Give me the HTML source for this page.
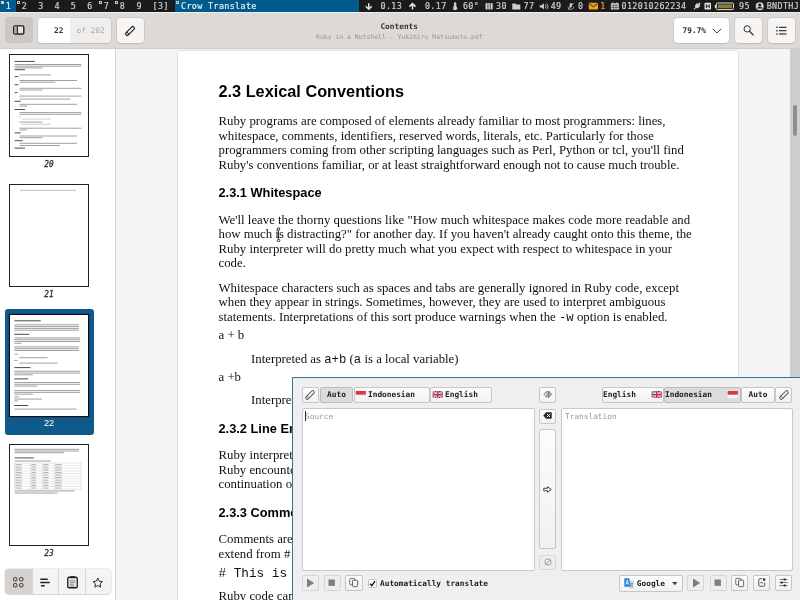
<!DOCTYPE html>
<html><head><meta charset="utf-8"><title>Contents</title>
<style>
*{box-sizing:border-box;margin:0;padding:0}
html,body{width:800px;height:600px;overflow:hidden;background:#f6f5f4}
body{position:relative;will-change:transform;font-family:"DejaVu Sans Mono","Liberation Mono",monospace;color:#2e3436}
.abs{position:absolute}
/* top bar */
#bar{position:absolute;left:0;top:0;width:800px;height:12px;background:#1b1b1b;color:#cfcfcf;font-size:8.4px;letter-spacing:0.37px;line-height:12.6px;white-space:pre;overflow:hidden}
#bar span{position:absolute;top:0;height:12px;-webkit-text-stroke:0.18px currentColor}
#bar .sq{width:3px;height:3px;border:0.8px solid #c8c8c8;top:1px;background:transparent}
/* header */
#hdr{position:absolute;left:0;top:12px;width:800px;height:37px;background:#dcd9d6;border-top:1.500px solid #f1f0ef;border-bottom:1px solid #cfccc9}
.btn{position:absolute;background:#f6f5f4;border-radius:4px;box-shadow:0 0 0 1px rgba(0,0,0,.06),0 1px 1px rgba(0,0,0,.08)}
/* sidebar */
#side{position:absolute;left:0;top:49px;width:116px;height:551px;background:#fff;border-right:1px solid #d5d2cf}
.thumb{position:absolute;left:10px;width:80px;background:#fff;border:1px solid #222}
.tlabel{position:absolute;left:0;width:98px;text-align:center;font-style:italic;font-weight:normal;-webkit-text-stroke:0.3px #2a2a2a;font-size:8.800px;line-height:10px;color:#2a2a2a;transform:scaleX(.88)}
/* document */
#page{position:absolute;left:178px;top:51px;width:560px;height:549px;background:#fff;box-shadow:0 0 2px rgba(0,0,0,.25)}
.ln{position:absolute;white-space:pre;font-family:"Liberation Serif",serif;font-size:12.8px;line-height:15px;color:#111}
.h1{font-family:"Liberation Sans",sans-serif;font-weight:bold;font-size:16.3px;line-height:20px;color:#000}
.h2{font-family:"Liberation Sans",sans-serif;font-weight:bold;font-size:12.8px;line-height:15px;color:#000}
.tt{font-family:"Liberation Mono",monospace;font-size:12.300px}
/* crow */
#crow{position:absolute;left:292px;top:377px;width:520px;height:230px;background:#efefef;border:1px solid #3a7396;box-shadow:inset 0 1px 0 #e2eff6;font-size:7.8px;color:#222}
.qb{position:absolute;line-height:14px;font-weight:bold;font-size:7.8px;color:#1a1a1a;overflow:hidden;background:linear-gradient(#fcfcfc,#f1f1f1);border:1px solid #c6c6c6;border-radius:2px;height:15.5px;white-space:pre}
.qb.dis{background:#eeeeee;border-color:#d6d6d6}
.qb.on{background:#dcdcdc;border-color:#bdbdbd}
.ta{position:absolute;background:#fff;border:1px solid #c8c8c8;border-radius:2px}
.ph{position:absolute;color:#9a9a9a;font-size:7.8px;line-height:10px}
</style></head><body>

<div id="bar">
<span style="left:0;width:16px;background:#005b8c"></span><span style="left:174.5px;width:184.5px;background:#005b8c"></span>
<span style="left:5.7px;color:#ececec">1</span><span style="left:21.8px">2</span><span style="left:38.3px">3</span><span style="left:54.5px">4</span><span style="left:70.7px">5</span><span style="left:87.2px">6</span><span style="left:103.7px">7</span><span style="left:119.7px">8</span><span style="left:136.6px">9</span><span style="left:152.6px">[3]</span>
<span style="left:181px;color:#e6eef4">Crow Translate</span><span class="sq" style="left:17.2px"></span><span class="sq" style="left:99px"></span><span class="sq" style="left:115.4px"></span><span class="sq" style="left:176.2px"></span><span class="sq" style="left:0.8px;background:#e8e8e8"></span>
<span style="left:380.5px">0.13</span><span style="left:424.9px">0.17</span><span style="left:462.9px">60°</span><span style="left:496px">30</span><span style="left:523.5px">77</span><span style="left:550.7px">49</span><span style="left:577.9px">0</span><span style="left:621.5px">012010262234</span><span style="left:739.1px">95</span><span style="left:766.7px">BNDTHJ</span><span style="left:600.3px;color:#f0a020">1</span>
<svg class="abs" style="left:0;top:0" width="800" height="12" viewBox="0 0 800 12">
<g fill="none" stroke="#e4e4e4" stroke-width="1.5"><path d="M368.800 3.300V9M365.800 6.300L368.800 9.300L371.800 6.300"/><path d="M412.500 9.600V3.800M409.500 6.600L412.500 3.600L415.500 6.600"/></g>
<g fill="#cfcfcf"><rect x="453.900" y="2.300" width="2.400" height="6" rx="1.200"/><circle cx="455.100" cy="8.200" r="2.100"/>
<rect x="485.500" y="3" width="7.200" height="6.600" rx="0.800"/>
<path d="M512.300 3.600h3l.8 1h4.200v4.900h-8z"/>
<path d="M539.800 5.200h1.800l2.300-2v6.400l-2.300-2h-1.800z"/></g>
<g fill="none" stroke="#cfcfcf" stroke-width="0.800"><path d="M545.200 4.600a2.500 2.500 0 0 1 0 3.600M546.600 3.400a4.200 4.200 0 0 1 0 6"/></g>
<g fill="#1b1b1b"><rect x="487.600" y="3" width="0.700" height="6.600"/><rect x="489.900" y="3" width="0.700" height="6.600"/></g>
<g fill="#bdbdbd"><rect x="569.600" y="3" width="2.400" height="4.400" rx="1.200"/><path d="M568.300 6.500a2.500 2.500 0 0 0 5 0h.6a3 3 0 0 1-2.800 3v.5h-.6v-.5a3 3 0 0 1-2.800-3z"/></g>
<path d="M573.500 3L568 9.800" stroke="#cfcfcf" stroke-width="0.900"/>
<rect x="588.800" y="2.800" width="9.200" height="6.600" rx="0.600" fill="#f0a020"/><path d="M589.300 3.600L593.400 6.800L597.500 3.600" fill="none" stroke="#1b1b1b" stroke-width="0.900"/>
<g fill="#cfcfcf"><rect x="610.800" y="3.300" width="8.200" height="6.300" rx="0.600"/><rect x="612.300" y="2.300" width="1" height="1.600"/><rect x="616.500" y="2.300" width="1" height="1.600"/></g>
<g stroke="#1b1b1b" stroke-width="0.500"><path d="M611 5.200H619M613.500 5.200V9.600M616 5.200V9.600M611 7.400H619"/></g>
<g fill="#cfcfcf"><path d="M699.500 2.600l1.200 1.200-1.300 1.300.9.900-1.600 1.600c-.8.800-1.900.9-2.700.4l-1.700 1.700-.7-.7 1.700-1.700c-.5-.8-.4-1.900.4-2.700l1.600-1.600.9.900z"/>
<rect x="704.500" y="2.800" width="6.500" height="6.800" rx="0.800" fill="#e6e6e6"/></g>
<path d="M706.300 4.300V8.100M709.200 4.300V8.100M706.300 6.200H709.200" stroke="#1b1b1b" stroke-width="1"/>
<rect x="716.300" y="3" width="17.200" height="6.600" rx="1.200" fill="none" stroke="#e0e0e0" stroke-width="1"/><rect x="714.800" y="4.800" width="1.400" height="3" fill="#e0e0e0"/><rect x="717.800" y="4.400" width="14.200" height="3.800" fill="#8c7a3a"/>
<circle cx="759.700" cy="6.200" r="4" fill="#cfcfcf"/><circle cx="759.700" cy="4.900" r="1.500" fill="#1b1b1b"/><path d="M756.900 8.600a2.900 2.600 0 0 1 5.600 0z" fill="#1b1b1b"/>
</svg>
</div>

<div id="hdr"></div>
<div class="btn" style="left:5px;top:17px;width:28px;height:26px;background:#cbc7c3;box-shadow:none"></div>
<div class="btn" style="left:38px;top:17.600px;width:73.200px;height:25.400px;background:#efeeed"></div>
<div class="btn" style="left:38px;top:17.600px;width:32px;height:25.400px;background:#fff;border-radius:4px 0 0 4px;box-shadow:none"></div>
<div class="abs" style="left:38px;top:17.500px;width:25.500px;height:26px;line-height:26px;text-align:right;font-size:7.800px;font-weight:bold;color:#2e3436">22</div>
<div class="abs" style="left:76.5px;top:17.700px;height:26px;line-height:26px;font-size:7.800px;color:#aaa7a4">of 202</div>
<div class="btn" style="left:117px;top:17.500px;width:27px;height:25.500px"></div>
<div class="abs" style="left:299.2px;top:20.500px;width:200px;text-align:center;font-size:7.800px;line-height:11px;font-weight:bold;color:#2e3436">Contents</div>
<div class="abs" style="left:249.4px;top:31.500px;width:300px;text-align:center;font-size:6.450px;line-height:10px;color:#9a9794">Ruby in a Nutshell - Yukihiro Matsumoto.pdf</div>
<div class="btn" style="left:674px;top:17.500px;width:55px;height:25.500px;background:#fff"></div>
<div class="abs" style="left:682.600px;top:18px;height:26px;line-height:26px;font-size:7.800px;font-weight:bold;color:#2e3436">79.7%</div>
<div class="btn" style="left:735px;top:17.500px;width:27px;height:25.500px"></div>
<div class="btn" style="left:768px;top:17.500px;width:27px;height:25.500px"></div>

<!-- header icons -->
<svg class="abs" style="left:13px;top:25.400px" width="11.500" height="9.900" viewBox="0 0 23 19"><rect x="1.400" y="1.400" width="20.200" height="16.200" rx="2.500" fill="#e6e3e0" stroke="#222" stroke-width="2.800"/><rect x="2.500" y="2.500" width="5.500" height="14" fill="#a9a5a1"/><path d="M8.800 1.500V17.500" stroke="#2a2a2a" stroke-width="2.200"/></svg>
<svg class="abs" style="left:122.3px;top:22.5px" width="16" height="16" viewBox="-8 -8 16 16"><g transform="rotate(-45)"><rect x="-5.40" y="-1.55" width="10.8" height="3.1" rx="1.18" fill="none" stroke="#222" stroke-width="1.2"/><path d="M-3.08 -1.55V1.55" stroke="#222" stroke-width="0.96"/></g></svg>
<svg class="abs" style="left:711.5px;top:27.500px" width="10" height="6" viewBox="0 0 20 12"><path d="M1.500 1.500L10 10L18.500 1.500" fill="none" stroke="#444" stroke-width="2"/></svg>
<svg class="abs" style="left:742px;top:24px" width="13" height="13" viewBox="0 0 26 26"><circle cx="10.400" cy="9.800" r="6.300" fill="none" stroke="#333" stroke-width="2"/><path d="M15 14.500L22.500 22" stroke="#333" stroke-width="2.300" stroke-linecap="round"/></svg>
<svg class="abs" style="left:776px;top:25.500px" width="11" height="9.500" viewBox="0 0 22 19"><g fill="#333"><rect x="0.500" y="1.200" width="3" height="3" rx="1"/><rect x="0.500" y="7.800" width="3" height="3" rx="1"/><rect x="0.500" y="14.400" width="3" height="3" rx="1"/><rect x="6" y="1.500" width="15" height="2.400"/><rect x="6" y="8.100" width="15" height="2.400"/><rect x="6" y="14.700" width="15" height="2.400"/></g></svg>

<div id="side"></div>
<div class="thumb" style="left:9px;top:54px;width:80px;height:102.500px"></div>
<div class="tlabel" style="top:159.200px">20</div>
<div class="thumb" style="left:9px;top:184px;width:80px;height:102.500px"></div>
<div class="tlabel" style="top:289px">21</div>
<div class="abs" style="left:4.5px;top:309px;width:89px;height:125.500px;background:#10598b;border-radius:3px"></div>
<div class="thumb" style="left:9px;top:314px;width:80px;height:103px;border-color:#111;box-shadow:0 0 1px #012"></div>
<div class="tlabel" style="top:418px;color:#fff;-webkit-text-stroke:0;transform:none;font-style:normal;font-weight:normal;font-family:'Liberation Sans',sans-serif;font-size:9.200px">22</div>
<div class="thumb" style="left:9px;top:444px;width:80px;height:102px"></div>
<div class="tlabel" style="top:548px">23</div>
<svg class="abs" style="left:9px;top:55px" width="80" height="102" viewBox="0 0 80 102"><path d="M5.6 9.5h66.7M5.6 11.2h66.7M5.6 12.9h27.7M10.6 19.9h31.4M10.6 25.5h57.4M10.6 27.2h35.8M10.6 33.3h61.8M10.6 35.0h22.8M10.6 41.1h61.8M10.6 44.1h50.9M10.6 49.3h57.4M10.6 51.1h7.6M10.6 57.6h61.8M10.6 59.3h61.8M10.6 61.5h1.1M10.6 67.1h22.8M10.6 73.2h61.8M10.6 74.9h7.6M10.6 81.0h57.4M10.6 82.7h22.8M10.6 88.3h57.4M10.6 90.5h40.1" stroke="#959595" stroke-width="0.9" fill="none"/><path d="M12.8 64.1h29.3M12.8 69.3h29.3" stroke="#c4c4c4" stroke-width="0.8" fill="none"/><path d="M5.6 6.4h20.2M5.6 14.7h10.4M5.6 21.6h3.9M5.6 29.8h3.9M5.6 37.6h2.8M5.6 46.3h6.1M5.6 54.5h10.4M5.6 77.9h6.1M5.6 85.7h8.2M5.6 93.1h10.4" stroke="#4a4a4a" stroke-width="1" fill="none"/></svg>
<svg class="abs" style="left:9px;top:185px" width="80" height="102" viewBox="0 0 80 102"><path d="M11 5.3h56" stroke="#b8b8b8" stroke-width="0.9" fill="none"/></svg>
<svg class="abs" style="left:9px;top:314px" width="80" height="103" viewBox="0 0 80 103"><path d="M5.3 10.8h64.6M5.3 12.6h64.6M5.3 14.4h64.6M5.3 16.2h64.6M5.3 23.9h65.8M5.3 25.7h65.8M5.3 27.5h65.8M5.3 29.3h7.2M5.3 32.9h64.6M5.3 34.7h64.6M5.3 36.5h64.6M5.3 40.1h3.8M10.3 43.7h28.2M5.3 46.4h3.2M10.3 49.1h38.3M5.3 57.2h65.8M5.3 59.0h65.8M5.3 60.8h18.5M5.3 68.5h65.8M5.3 70.3h65.8M5.3 72.1h23.0M5.3 76.6h65.8M5.3 78.4h65.8M5.3 80.2h18.5M5.3 82.9h5.0M5.3 85.1h27.5M5.3 86.9h3.8M5.3 95.1h62.4" stroke="#959595" stroke-width="0.9" fill="none"/><path d="M5.3 6.8h26.4M5.3 20.3h15.1M5.3 53.6h16.2M5.3 64.9h14.0M5.3 91.5h14.0" stroke="#4a4a4a" stroke-width="1" fill="none"/></svg>
<svg class="abs" style="left:9px;top:444px" width="80" height="102" viewBox="0 0 80 102"><path d="M5.6 5.3h64.6M5.6 7.0h64.6M5.6 8.7h49.4M5.6 17.0h36.4M5.6 46.9h60.2M5.6 49.0h42.9" stroke="#959595" stroke-width="0.9" fill="none"/><path d="M5.6 13.9h19.1" stroke="#4a4a4a" stroke-width="1" fill="none"/><path d="M5.6 19.1H72.3M5.6 21.7H72.3M5.6 24.3H72.3M5.6 26.9H72.3M5.6 29.5H72.3M5.6 32.1H72.3M5.6 34.7H72.3M5.6 37.3H72.3M5.6 39.9H72.3M5.6 42.5H72.3M5.6 45.1H72.3M5.6 19.1V45.1M21.4 19.1V45.1M33.3 19.1V45.1M45.3 19.1V45.1M72.3 19.1V45.1" stroke="#cfcfcf" stroke-width="0.5" fill="none"/><path d="M6.5 20.6h6.1M22.3 20.6h4.8M34.2 20.6h5.2M46.1 20.6h6.5M6.5 23.2h6.1M22.3 23.2h4.8M34.2 23.2h5.2M46.1 23.2h6.5M6.5 25.8h6.1M22.3 25.8h4.8M34.2 25.8h5.2M46.1 25.8h6.5M6.5 28.4h6.1M22.3 28.4h4.8M34.2 28.4h5.2M46.1 28.4h6.5M6.5 31.0h6.1M22.3 31.0h4.8M34.2 31.0h5.2M46.1 31.0h6.5M6.5 33.6h6.1M22.3 33.6h4.8M34.2 33.6h5.2M46.1 33.6h6.5M6.5 36.2h6.1M22.3 36.2h4.8M34.2 36.2h5.2M46.1 36.2h6.5M6.5 38.8h6.1M22.3 38.8h4.8M34.2 38.8h5.2M46.1 38.8h6.5M6.5 41.4h6.1M22.3 41.4h4.8M34.2 41.4h5.2M46.1 41.4h6.5M6.5 44.0h6.1M22.3 44.0h4.8M34.2 44.0h5.2M46.1 44.0h6.5" stroke="#9a9a9a" stroke-width="0.8" fill="none"/></svg>
<div class="btn" style="left:5px;top:569px;width:105.500px;height:25px;background:#f5f4f3;box-shadow:0 0 0 1px rgba(0,0,0,.07),0 1px 1px rgba(0,0,0,.1)"></div>
<div class="abs" style="left:5px;top:569px;width:27px;height:25px;background:#d5d2cf;border-radius:4px 0 0 4px"></div>
<div class="abs" style="left:31.5px;top:569px;width:1px;height:25px;background:#dad7d4"></div>
<div class="abs" style="left:58px;top:569px;width:1px;height:25px;background:#dad7d4"></div>
<div class="abs" style="left:84.5px;top:569px;width:1px;height:25px;background:#dad7d4"></div>
<svg class="abs" style="left:13px;top:577px" width="10.500" height="10.500" viewBox="0 0 21 21"><g fill="none" stroke="#3c3a30" stroke-width="2"><rect x="1.200" y="1.200" width="6.600" height="6.600" rx="1.500"/><rect x="13.200" y="1.200" width="6.600" height="6.600" rx="1.500"/><rect x="1.200" y="13.200" width="6.600" height="6.600" rx="1.500"/><rect x="13.200" y="13.200" width="6.600" height="6.600" rx="1.500"/></g></svg>
<svg class="abs" style="left:39.5px;top:577.500px" width="10" height="9" viewBox="0 0 20 18"><g fill="#222"><rect x="0.500" y="1" width="15" height="3" rx="1"/><rect x="0.500" y="7.500" width="19" height="3" rx="1"/><rect x="2" y="14" width="7.500" height="3" rx="1"/></g></svg>
<svg class="abs" style="left:66.5px;top:576px" width="11" height="12.500" viewBox="0 0 22 25"><rect x="1.500" y="2.500" width="19" height="21" rx="2.500" fill="#e8e8e8" stroke="#1c1c1c" stroke-width="2.600"/><rect x="6" y="0.500" width="10" height="4" rx="1" fill="#1c1c1c"/><path d="M5.500 9.500H16.500M5.500 13H16.500M5.500 16.500H13M5.500 20H15" stroke="#777" stroke-width="1.600"/></svg>
<svg class="abs" style="left:92px;top:576.500px" width="11.500" height="11" viewBox="0 0 23 22"><path d="M11.500 2.200L14.300 8.300L21 9.100L16.100 13.700L17.400 20.300L11.500 17L5.600 20.300L6.900 13.700L2 9.100L8.700 8.300z" fill="none" stroke="#2a2a2a" stroke-width="2" stroke-linejoin="round"/></svg>

<div id="page"></div>
<div class="abs" style="left:790px;top:49px;width:10px;height:551px;background:#cfcfcf"></div>
<div class="abs" style="left:793px;top:105px;width:4px;height:31px;background:#8f8f8f;border-radius:2px"></div>

<div class="ln h1" style="left:218.5px;top:81px">2.3 Lexical Conventions</div>
<div class="ln" style="left:218.5px;top:114px">Ruby programs are composed of elements already familiar to most programmers: lines,</div>
<div class="ln" style="left:218.5px;top:128.6px">whitespace, comments, identifiers, reserved words, literals, etc. Particularly for those</div>
<div class="ln" style="left:218.5px;top:143.400px">programmers coming from other scripting languages such as Perl, Python or tcl, you'll find</div>
<div class="ln" style="left:218.5px;top:157.8px">Ruby's conventions familiar, or at least straightforward enough not to cause much trouble.</div>
<div class="ln h2" style="left:218.5px;top:184.700px">2.3.1 Whitespace</div>
<div class="ln" style="left:218.5px;top:212.500px">We'll leave the thorny questions like "How much whitespace makes code more readable and</div>
<div class="ln" style="left:218.5px;top:227.100px">how much is distracting?" for another day. If you haven't already caught onto this theme, the</div>
<div class="ln" style="left:218.5px;top:241.700px">Ruby interpreter will do pretty much what you expect with respect to whitespace in your</div>
<div class="ln" style="left:218.5px;top:256.300px">code.</div>
<div class="ln" style="left:218.5px;top:280.500px">Whitespace characters such as spaces and tabs are generally ignored in Ruby code, except</div>
<div class="ln" style="left:218.5px;top:295px">when they appear in strings. Sometimes, however, they are used to interpret ambiguous</div>
<div class="ln" style="left:218.5px;top:309.700px">statements. Interpretations of this sort produce warnings when the <span class="tt">-w</span> option is enabled.</div>
<div class="ln" style="left:218.5px;top:328px">a + b</div>
<div class="ln" style="left:251px;top:351.500px">Interpreted as <span class="tt">a+b</span> (<span class="tt">a</span> is a local variable)</div>
<div class="ln" style="left:218.5px;top:370px">a +b</div>
<div class="ln" style="left:251px;top:393px">Interpreted as <span class="tt">a(+b)</span></div>
<div class="ln h2" style="left:218.5px;top:420.500px">2.3.2 Line Endings</div>
<div class="ln" style="left:218.5px;top:448px">Ruby interprets semicolons and newline characters as the ending of a statement.</div>
<div class="ln" style="left:218.5px;top:462.6px">Ruby encounters operators, such as +, -, or backslash at the end of a line,</div>
<div class="ln" style="left:218.5px;top:477.2px">continuation of a statement.</div>
<div class="ln h2" style="left:218.5px;top:505px">2.3.3 Comments</div>
<div class="ln" style="left:218.5px;top:532px">Comments are lines of annotation within Ruby code that are ignored at runtime.</div>
<div class="ln" style="left:218.5px;top:546.6px">extend from # to the end of the line.</div>
<div class="ln" style="left:218.5px;top:565.700px;font-family:'Liberation Mono',monospace;font-size:12.7px"># This is a comment.</div>
<div class="ln" style="left:218.5px;top:589px">Ruby code can also contain embedded documents</div>

<svg class="abs" style="left:275.6px;top:226.600px" width="5" height="15.500" viewBox="0 0 10 31"><g fill="none" stroke="#2a2a2a" stroke-width="2"><path d="M5 6.500V24.500"/><circle cx="5" cy="4" r="2.600" fill="#fff"/><circle cx="5" cy="27" r="2.600" fill="#fff"/></g></svg>
<div id="crow"></div>
<!-- crow translate window contents -->
<svg width="0" height="0" style="position:absolute">
<defs>
<symbol id="pencil" viewBox="0 0 16 16"><path d="M11.2 2.3a1.4 1.4 0 0 1 2 0l.5.5a1.4 1.4 0 0 1 0 2L6 12.5l-3.6 1.1 1.1-3.6z" fill="none" stroke="#3a3a3a" stroke-width="1.2" stroke-linejoin="round"/></symbol>
<symbol id="uk" viewBox="0 0 22 16"><rect width="22" height="16" fill="#1f3f8f"/><path d="M0 0L22 16M22 0L0 16" stroke="#fff" stroke-width="3.2"/><path d="M0 0L22 16M22 0L0 16" stroke="#d22" stroke-width="1.2"/><path d="M11 0V16M0 8H22" stroke="#fff" stroke-width="5.4"/><path d="M11 0V16M0 8H22" stroke="#d8202a" stroke-width="3.2"/></symbol>
<symbol id="id" viewBox="0 0 22 16"><rect width="22" height="16" fill="#f4f4f4"/><rect width="22" height="8" fill="#e0353f"/></symbol>
<symbol id="play" viewBox="0 0 16 16"><path d="M4 2L13.5 8L4 14z" fill="#7c7c7c"/></symbol>
<symbol id="stop" viewBox="0 0 16 16"><rect x="3.5" y="3.5" width="9" height="9" fill="#808080"/></symbol>
<symbol id="copy" viewBox="0 0 16 16"><rect x="2.5" y="2" width="7.5" height="9.5" rx="1.5" fill="none" stroke="#555" stroke-width="1.2"/><rect x="6.5" y="4.5" width="7.5" height="9.5" rx="1.5" fill="#f6f6f6" stroke="#444" stroke-width="1.2"/></symbol>
</defs></svg>

<div class="qb" style="left:302px;top:387px;width:17px"></div>
<div class="qb on" style="left:320px;top:387px;width:33px;text-align:center">Auto</div>
<div class="qb" style="left:354px;top:387px;width:76px;padding-left:13px">Indonesian</div>
<div class="qb" style="left:430px;top:387px;width:62px;padding-left:14px">English</div>
<div class="qb" style="left:539px;top:387px;width:17px"></div>
<div class="qb" style="left:602px;top:387px;width:62px;padding-left:0px">English</div>
<div class="qb on" style="left:664px;top:387px;width:77px;padding-left:0px">Indonesian</div>
<div class="qb" style="left:741px;top:387px;width:34px;text-align:center">Auto</div>
<div class="qb" style="left:775px;top:387px;width:17px"></div>
<div class="ta" style="left:302px;top:408px;width:233px;height:162.500px"></div>
<div class="ph" style="left:305px;top:412px">Source</div>
<div class="abs" style="left:304.5px;top:411px;width:1px;height:10px;background:#333"></div>
<div class="ta" style="left:561px;top:408px;width:231.500px;height:162.500px"></div>
<div class="ph" style="left:565px;top:412px">Translation</div>
<div class="qb" style="left:539px;top:408.5px;width:17px"></div>
<div class="qb" style="left:539px;top:429px;width:17px;height:120px"></div>
<div class="qb dis" style="left:539px;top:554.500px;width:17px;height:15.500px"></div>
<div class="qb dis" style="left:302px;top:575px;width:16.5px;height:16px"></div>
<div class="qb dis" style="left:323.5px;top:575px;width:17px;height:16px"></div>
<div class="qb" style="left:345px;top:575px;width:17.5px;height:16px"></div>
<div class="abs" style="left:367.5px;top:578.5px;width:9px;height:9px;background:#fff;border:1px solid #c2c2c2;border-radius:1.5px"></div><svg class="abs" style="left:367.5px;top:578.5px" width="9" height="9" viewBox="0 0 18 18"><path d="M4 9.5L7.5 13.5L14 4.5" fill="none" stroke="#111" stroke-width="2.6"/></svg>
<div class="abs" style="left:380px;top:578px;font-size:7.8px;font-weight:bold;line-height:12px;white-space:pre;color:#1a1a1a">Automatically translate</div>
<div class="qb" style="left:619px;top:575px;width:63.5px;height:16.500px;padding-left:16.800px;line-height:16.800px">Google</div>
<div class="qb dis" style="left:687px;top:575px;width:17px;height:16px"></div>
<div class="qb dis" style="left:709.5px;top:575px;width:17px;height:16px"></div>
<div class="qb" style="left:731.2px;top:575px;width:17px;height:16px"></div>
<div class="qb" style="left:753px;top:575px;width:17px;height:16px"></div>
<div class="qb" style="left:775px;top:575px;width:17px;height:16px"></div>

<svg class="abs" style="left:355px;top:391px" width="11.6" height="7.4"><use href="#id"/></svg>
<svg class="abs" style="left:432px;top:391px" width="11.6" height="7.4"><use href="#uk"/></svg>
<svg class="abs" style="left:651px;top:391px" width="11.6" height="7.4"><use href="#uk"/></svg>
<svg class="abs" style="left:727px;top:391px" width="11.6" height="7.4"><use href="#id"/></svg>
<svg class="abs" style="left:304.2px;top:576.9px" width="12" height="12"><use href="#play"/></svg>
<svg class="abs" style="left:326.2px;top:577.1px" width="11.4" height="11.4"><use href="#stop"/></svg>
<svg class="abs" style="left:348.3px;top:577.4px" width="11" height="11"><use href="#copy"/></svg>
<svg class="abs" style="left:689.7px;top:576.9px" width="12" height="12"><use href="#play"/></svg>
<svg class="abs" style="left:712.2px;top:577.1px" width="11.4" height="11.4"><use href="#stop"/></svg>
<svg class="abs" style="left:734.3px;top:577.4px" width="11" height="11"><use href="#copy"/></svg>

<svg class="abs" style="left:543px;top:390.200px" width="9.500" height="8.500" viewBox="0 0 19 17"><path d="M8 2V15L1.800 8.500z" fill="#f4f4f4" stroke="#6a6a6a" stroke-width="1.800" stroke-linejoin="round"/><path d="M11 2V15L17.200 8.500z" fill="#b4b4b4" stroke="#6a6a6a" stroke-width="1.800" stroke-linejoin="round"/></svg>
<svg class="abs" style="left:542.900px;top:412px" width="9" height="7" viewBox="0 0 18 14"><path d="M6 0.5H16a1.5 1.5 0 0 1 1.5 1.5V12a1.5 1.5 0 0 1-1.5 1.5H6L0.5 7z" fill="#2b2b2b"/><path d="M8 4L14 10M14 4L8 10" stroke="#fff" stroke-width="2"/></svg>
<svg class="abs" style="left:543px;top:485.5px" width="9" height="7" viewBox="0 0 18 14"><path d="M1.5 4.5H9V1.5L16.5 7L9 12.5V9.5H1.5z" fill="none" stroke="#333" stroke-width="1.8" stroke-linejoin="round"/></svg>
<svg class="abs" style="left:543.5px;top:557.5px" width="8" height="8" viewBox="0 0 16 16"><circle cx="8" cy="8" r="6.3" fill="none" stroke="#8a8a8a" stroke-width="1.6"/><path d="M3.6 12.4L12.4 3.6" stroke="#8a8a8a" stroke-width="1.6"/></svg>

<svg class="abs" style="left:757.5px;top:578.2px" width="8" height="9" viewBox="0 0 16 18"><path d="M9 1.5H3.5a2 2 0 0 0-2 2v11a2 2 0 0 0 2 2h8a2 2 0 0 0 2-2V9" fill="none" stroke="#444" stroke-width="1.8"/><rect x="10" y="0.8" width="4.6" height="4.6" fill="#333"/><path d="M5 9.5H10" stroke="#444" stroke-width="1.8"/></svg>
<svg class="abs" style="left:779px;top:578px" width="9" height="9" viewBox="0 0 18 18"><path d="M1 3H17M1 9H17M1 15H17" stroke="#555" stroke-width="1.6"/><rect x="9.5" y="1" width="3.5" height="4" fill="#222"/><rect x="3.5" y="7" width="3.5" height="4" fill="#222"/><rect x="9.5" y="13" width="3.5" height="4" fill="#222"/></svg>
<svg class="abs" style="left:623.5px;top:577.5px" width="10" height="11.5" viewBox="0 0 20 23"><path d="M8 5H18a1.5 1.5 0 0 1 1.5 1.5V20a1.500 1.500 0 0 1-1.500 1.500H11z" fill="#d0d4d8"/><path d="M1.500 0.500H10.500L13.500 17.500H1.500A1 1 0 0 1 0.500 16.500V1.500A1 1 0 0 1 1.500 0.500z" fill="#2f86e0"/><path d="M3.800 13L6.500 4.500L9.200 13M4.800 10.300H8.200" fill="none" stroke="#fff" stroke-width="1.500"/><path d="M12.500 11H18M15.200 9.500V11M17 11C16.500 14 14.500 16 12.800 17M13.800 12.500C14.500 14.500 16 16 17.800 17" fill="none" stroke="#5b7fa8" stroke-width="1.100"/></svg>
<svg class="abs" style="left:671.6px;top:582.2px" width="5.6" height="3.4" viewBox="0 0 10 6"><path d="M0 0H10L5 6z" fill="#444"/></svg>

<svg class="abs" style="left:302.3px;top:386.6px" width="16" height="16" viewBox="-8 -8 16 16"><g transform="rotate(-45)"><rect x="-5.30" y="-1.50" width="10.6" height="3.0" rx="1.14" fill="none" stroke="#4a4a4a" stroke-width="0.95"/><path d="M-3.05 -1.50V1.50" stroke="#4a4a4a" stroke-width="0.76"/></g></svg>
<svg class="abs" style="left:775.6px;top:386.6px" width="16" height="16" viewBox="-8 -8 16 16"><g transform="rotate(-45)"><rect x="-5.30" y="-1.50" width="10.6" height="3.0" rx="1.14" fill="none" stroke="#4a4a4a" stroke-width="0.95"/><path d="M-3.05 -1.50V1.50" stroke="#4a4a4a" stroke-width="0.76"/></g></svg>
</body></html>
